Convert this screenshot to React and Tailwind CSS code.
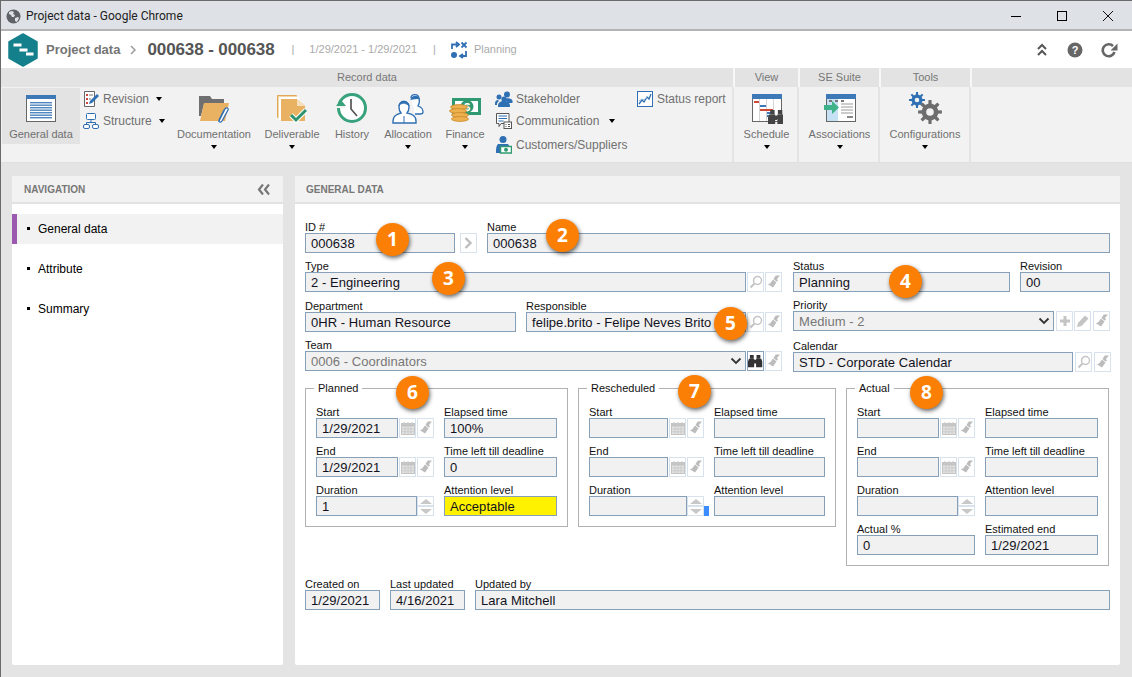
import React from "react";

function gear(cx, cy, ro, ri, n, hole) {
  let d = "";
  const step = (Math.PI * 2) / n;
  for (let i = 0; i < n; i++) {
    const a = i * step;
    const pts = [
      [ri, a - step * 0.5],
      [ri, a - step * 0.26],
      [ro, a - step * 0.16],
      [ro, a + step * 0.16],
      [ri, a + step * 0.26],
    ];
    pts.forEach(([r, t], j) => {
      const x = (cx + r * Math.cos(t)).toFixed(2);
      const y = (cy + r * Math.sin(t)).toFixed(2);
      d += (i === 0 && j === 0 ? "M" : "L") + x + " " + y + " ";
    });
  }
  d += "Z ";
  d += `M${cx - hole} ${cy} a${hole} ${hole} 0 1 0 ${hole * 2} 0 a${hole} ${hole} 0 1 0 ${-hole * 2} 0 Z`;
  return d;
}

const Caret = () => <span className="block w-0 h-0 border-x-[3.5px] border-x-transparent border-t-[4px] border-t-black" />;

const IconGeneral = () => (
  <svg width="32" height="32" viewBox="0 0 32 32">
    <rect x="1.500" y="3.500" width="29" height="26" fill="#fff" stroke="#666" />
    <rect x="1" y="3" width="30" height="4" fill="#3e79b7" />
    {[10, 12.5, 15, 17.5, 20, 22.5, 25].map((y) => (
      <rect key={y} x="5" y={y} width="22" height="1.400" fill="#4f86bf" />
    ))}
  </svg>
);
const IconDoc = () => (
  <svg width="32" height="32" viewBox="0 0 32 32">
    <path d="M1 4h11l2 3h12v5H6L3 24H1z" fill="#6f6f6f" />
    <path d="M6 11h25l-4 18H2z" fill="#e9b263" />
    <path d="M21 29l6-12c1-2 4-1 3 1l-6 11c-1 2-4 1-3-1l5-10" fill="#fff" stroke="#2f6eb3" strokeWidth="1.300" strokeLinecap="round" />
  </svg>
);
const IconDeliverable = () => (
  <svg width="32" height="32" viewBox="0 0 32 32">
    <rect x="1" y="3" width="20" height="23" fill="#f3d6a6" />
    <rect x="3" y="5" width="20" height="23" fill="#fff" />
    <path d="M1.500 3.500h19M1.500 3.500v22" stroke="#e0a857" fill="none" />
    <path d="M5 7h16l8 7v15H5z" fill="#e9b263" />
    <path d="M21 7l8 7h-8z" fill="#f6e0bb" />
    <path d="M15 23l5 5 10-10" fill="none" stroke="#fff" strokeWidth="5" />
    <path d="M15 23l5 5 10-10" fill="none" stroke="#2e9470" strokeWidth="3" />
  </svg>
);
const IconHistory = () => (
  <svg width="32" height="32" viewBox="0 0 32 32">
    <circle cx="16" cy="16" r="13.500" fill="#fff" stroke="#37a27c" strokeWidth="3" />
    <path d="M0 14l5-6 5 6z" fill="#37a27c" />
    <rect x="0" y="14" width="9" height="2" fill="#f2f2f2" />
    <path d="M15 7v10l6 7" fill="none" stroke="#555" strokeWidth="1.700" />
  </svg>
);
const IconAllocation = () => (
  <svg width="32" height="32" viewBox="0 0 32 32">
    <path d="M19 6c0-4 7-5 8 0 1 3 0 6-1 8 3 1 5 2 5 6 0 1-1 2-3 2h-5" fill="#fff" stroke="#2f6fb3" strokeWidth="1.300" />
    <path d="M18.500 8c0-5 8.500-6 9-1-3 0-6 0-9 1z" fill="#2f6fb3" />
    <path d="M7 15c0-7 10-7 10 0 0 3-1 5-2 6 4 1 9 2 9 8v2H1v-2c0-6 5-7 8-8-1-1-2-3-2-6z" fill="#fff" stroke="#2f6fb3" strokeWidth="1.400" />
    <path d="M7 14c1-3 3-2 5-3 2 1 4 1 5 3 0-6-10-7-10 0zM12 24v7" fill="#2f6fb3" stroke="#2f6fb3" />
  </svg>
);
const IconFinance = () => (
  <svg width="32" height="32" viewBox="0 0 32 32">
    <rect x="3" y="6" width="29" height="17" fill="#2f9a72" />
    <rect x="6" y="9" width="23" height="11" fill="#fff" />
    <circle cx="18" cy="14.500" r="6.500" fill="#2f9a72" />
    <text x="18" y="18.500" textAnchor="middle" fontSize="11" fontWeight="700" fill="#fff" fontFamily="Liberation Sans">$</text>
    {[14, 18, 22, 26].map((y) => (
      <ellipse key={y} cx={y < 18 ? 10 : y < 22 ? 9 : 11} cy={y + 1} rx="8.500" ry="2.400" fill="#eeb04f" stroke="#c98a2a" strokeWidth=".8" />
    ))}
  </svg>
);
const IconRevision = () => (
  <svg width="16" height="16" viewBox="0 0 16 16">
    <path d="M1.500.5h10v15h-10z" fill="#fff" stroke="#666" />
    <path d="M3 3h2v2H3zM3 7h2v2H3zM3 11h2v2H3z" fill="#d2473b" />
    <path d="M6 4h4M6 8h2" stroke="#777" />
    <path d="M6 13l1-3 7-7 2 2-7 7z" fill="#2f6fb3" />
  </svg>
);
const IconStructure = () => (
  <svg width="16" height="16" viewBox="0 0 16 16" fill="#fff" stroke="#2f6fb3">
    <rect x="3.500" y=".5" width="9" height="6" rx="1" />
    <path d="M8 6.500v3M3.500 11.500v-2h9v2" fill="none" />
    <rect x=".5" y="11.500" width="6" height="4" rx="1.500" />
    <rect x="9.500" y="11.500" width="6" height="4" rx="1.500" />
  </svg>
);
const IconStakeholder = () => (
  <svg width="18" height="16" viewBox="0 0 18 16" fill="#2f6fb3">
    <circle cx="12" cy="3.500" r="3" />
    <circle cx="4" cy="6" r="2.500" />
    <path d="M9 8c2-1 5-1 7 0 2 1 2 4 1 4h-5c0-2-1-3-3-4z" />
    <circle cx="9" cy="8" r="2.600" />
    <path d="M3 15c0-3 2-5 6-5s6 2 6 5v1H3zM0 13c0-3 1-4 3-4l1 1c-2 1-2 3-2 4H0z" />
  </svg>
);
const IconComm = () => (
  <svg width="16" height="16" viewBox="0 0 16 16">
    <path d="M.5.500h12.500v10H5l-2 3v-3H.5z" fill="#fff" stroke="#555" />
    <path d="M2.500 3h8.500M2.500 5.500h8.500M2.500 8h5" stroke="#2f6fb3" />
    <rect x="8" y="9" width="7.500" height="6.500" fill="#fff" stroke="#555" />
    <path d="M9.500 11.500h1M12 11.500h2M9.500 13.500h1M12 13.500h2" stroke="#555" />
  </svg>
);
const IconCustomers = () => (
  <svg width="16" height="18" viewBox="0 0 16 18">
    <circle cx="7" cy="3.500" r="3.500" fill="#2f6fb3" />
    <path d="M2 8h10l2 3H4v6H0c0-4 0-7 2-9z" fill="#2f6fb3" />
    <rect x="4.500" y="10.500" width="11" height="6.500" fill="#fff" stroke="#2f9a72" strokeWidth="1.500" />
    <circle cx="10" cy="13.750" r="2" fill="#2f9a72" />
  </svg>
);
const IconStatus = () => (
  <svg width="16" height="16" viewBox="0 0 16 16">
    <rect x=".5" y=".5" width="15" height="15" fill="#fff" stroke="#2f6fb3" />
    <path d="M2 13l3-4 2 2 3-5 2 2 2-5" fill="none" stroke="#2f6fb3" strokeWidth="1.300" />
    <path d="M2 10l3-2 2 1 3-3" fill="none" stroke="#8fb3d6" />
  </svg>
);
const Binoc = ({ x = 0, y = 0, s = 1, c = "#444" }) => (
  <g transform={`translate(${x} ${y}) scale(${s})`} fill={c}>
    <path d="M2 1h4v4H2zM9 1h4v4H9z" />
    <path d="M1 5h5.500v9H0V8zM8.500 5H14l1 3v6H8.500zM6.500 6h2v4h-2z" />
  </g>
);
const IconSchedule = () => (
  <svg width="32" height="32" viewBox="0 0 32 32">
    <rect x="1.500" y="2.500" width="29" height="27" fill="#fff" stroke="#666" />
    <rect x="1" y="2" width="30" height="5" fill="#3e79b7" />
    <path d="M8.500 7v22M15.500 7v22M22.500 7v22" stroke="#d5d5d5" />
    <rect x="3" y="9" width="5" height="2" fill="#cf4a36" />
    <rect x="9" y="13" width="6" height="2" fill="#3e79b7" />
    <rect x="9" y="17" width="13" height="2" fill="#cf4a36" />
    <rect x="16" y="20" width="4" height="2" fill="#3e79b7" />
    <rect x="16" y="23" width="2" height="2" fill="#3e79b7" />
    <Binoc x="17" y="17" s="1.100" />
  </svg>
);
const IconAssoc = () => (
  <svg width="32" height="32" viewBox="0 0 32 32">
    <rect x="2.500" y="2.500" width="29" height="27" fill="#fff" stroke="#666" />
    <rect x="2" y="2" width="30" height="5" fill="#3e79b7" />
    <rect x="3" y="7" width="11" height="22" fill="#c6e1f4" />
    <rect x="5" y="8" width="3" height="2" fill="#777" />
    <rect x="11" y="8" width="3" height="2" fill="#777" />
    <rect x="17" y="8" width="3" height="2" fill="#777" />
    <path d="M17 12h12M17 15h12M17 18h12M17 21h12" stroke="#999" />
    <rect x="23" y="24" width="6" height="2" fill="#888" />
    <path d="M0 13h8V9l7 6.500L8 22v-4H0z" fill="#3fb28a" />
  </svg>
);
const IconConfig = () => (
  <svg width="36" height="36" viewBox="0 0 36 36">
    <path fillRule="evenodd" d={gear(10, 10, 8, 5.500, 8, 2.300)} fill="#2f6fb3" />
    <path fillRule="evenodd" d={gear(23, 22, 12, 8.300, 8, 3.800)} fill="#6d6d6d" />
  </svg>
);

const Big = ({ w, icon, label, caret = true, pl = "" }) => (
  <div className={`flex flex-col items-center shrink-0 ${w} ${pl}`}>
    <div className="mt-[5px] h-[32px] flex items-center justify-center">{icon}</div>
    <div className="mt-[4px] h-[12px] leading-[12px] text-[11px] text-[#707070] whitespace-nowrap">{label}</div>
    {caret && <div className="mt-[5px]"><Caret /></div>}
  </div>
);

const Small = ({ icon, label, caret, ml = "ml-[10px]" }) => (
  <div className="flex items-center h-[22px] whitespace-nowrap">
    <span className="w-[18px] flex justify-center shrink-0">{icon}</span>
    <span className="ml-[3px] text-[12px] text-[#707070]">{label}</span>
    {caret && <span className={ml}><Caret /></span>}
  </div>
);

const Mag = () => (
  <svg width="14" height="14" viewBox="0 0 14 14" fill="none" stroke="#c4c4c4">
    <circle cx="8.500" cy="5.500" r="4" strokeWidth="1.400" />
    <path d="M5.500 8.500L1.500 12.500" strokeWidth="2" />
  </svg>
);
const Brush = () => (
  <svg width="14" height="14" viewBox="0 0 14 14" fill="#bcbcbc">
    <path d="M8 1.500l1-1 4 0-3 3.500 1 2-1.500.500-3-2.500z" />
    <path d="M6 4.500l3.500 3-3.500 5-5.500-3.500c1 0 2 0 3-1z" />
  </svg>
);
const Cal = () => (
  <svg width="14" height="14" viewBox="0 0 14 14">
    <rect x=".5" y="2.500" width="13" height="11" fill="#e4e4e4" stroke="#c4c4c4" />
    <rect x="1" y="3" width="12" height="2.500" fill="#c4c4c4" />
    <path d="M3 1v3M7 1v3M11 1v3M1 8h12M1 10.800h12M4 5v8M7 5v8M10 5v8" stroke="#cacaca" />
  </svg>
);
const Plus = () => (
  <svg width="12" height="12" viewBox="0 0 12 12" fill="#c4c4c4">
    <path d="M4.500 1h3v3.500H11v3H7.500V11h-3V7.500H1v-3h3.500z" />
  </svg>
);
const Pencil = () => (
  <svg width="14" height="14" viewBox="0 0 14 14" fill="#c4c4c4">
    <path d="M1 13l1-4 7-7.500 3.500 3L5.500 12z" />
  </svg>
);
const BinoBtn = () => (
  <svg width="15" height="14" viewBox="0 0 15 14"><Binoc x="0" y="0" s="0.950" c="#333" /></svg>
);

const Btn = ({ children, cls = "", dark }) => (
  <div className={`w-[17px] h-[20px] shrink-0 flex items-center justify-center border bg-white ${dark ? "border-[#8aa3bd]" : "border-[#d8e2ec]"} ${cls}`}>
    {children}
  </div>
);

const Input = ({ value, muted, select, yellow }) => (
  <div className={`h-[20px] w-full flex items-center border border-[#86a0ba] pl-[5px] text-[13px] leading-none whitespace-nowrap overflow-hidden ${yellow ? "bg-[#fff200]" : "bg-[#f1f1f1]"} ${muted ? "text-[#777777]" : "text-[#111122]"}`}>
    <span className="flex-1 tracking-[0.05px]">{value}</span>
    {select && (
      <svg width="12" height="8" viewBox="0 0 12 8" className="mr-[3px]">
        <path d="M1.500 1.500L6 6l4.500-4.500" fill="none" stroke="#333" strokeWidth="1.800" />
      </svg>
    )}
  </div>
);

const Field = ({ label, w, ...rest }) => (
  <div className={`shrink-0 ${w}`}>
    <div className="h-[12px] leading-[12px] text-[11px] text-[#111] whitespace-nowrap">{label}</div>
    <Input {...rest} />
  </div>
);

const Spinner = () => (
  <div className="w-[17px] h-[20px] shrink-0 flex flex-col justify-between">
    <div className="h-[10px] border border-[#d8e2ec] flex items-center justify-center bg-white">
      <span className="block w-0 h-0 border-x-[6px] border-x-transparent border-b-[5px] border-b-[#c8c8c8]" />
    </div>
    <div className="h-[10px] border border-[#d8e2ec] flex items-center justify-center bg-white">
      <span className="block w-0 h-0 border-x-[6px] border-x-transparent border-t-[5px] border-t-[#c8c8c8]" />
    </div>
  </div>
);

const Group = ({ title, w, lw, dw, rw, vals, extra, blue }) => (
  <fieldset className={`shrink-0 border border-[#b1b1b1] ${w} pl-[10px] pb-[3px]`}>
    <legend className="-ml-[2px] px-[4px] h-[12px] leading-[12px] text-[11px] text-[#111]">{title}</legend>
    <div className="pt-[12px]">
      <div className="flex items-end mb-[7px]">
        <Field label="Start" value={vals.start} w={lw} />
        <Btn cls="ml-[1px]"><Cal /></Btn>
        <Btn cls="ml-[1px]"><Brush /></Btn>
        <div className="ml-[10px]"><Field label="Elapsed time" value={vals.elapsed} w={rw} /></div>
      </div>
      <div className="flex items-end mb-[7px]">
        <Field label="End" value={vals.end} w={lw} />
        <Btn cls="ml-[1px]"><Cal /></Btn>
        <Btn cls="ml-[1px]"><Brush /></Btn>
        <div className="ml-[10px]"><Field label="Time left till deadline" value={vals.left} w={rw} /></div>
      </div>
      <div className="flex items-end mb-[7px] relative">
        <Field label="Duration" value={vals.dur} w={dw} />
        <Spinner />
        {blue && <span className="absolute left-[115px] bottom-0 w-[5px] h-[10px] bg-[#3b8cff]" />}
        <div className="ml-[10px]"><Field label="Attention level" value={vals.att} yellow={vals.yellow} w={rw} /></div>
      </div>
      {extra}
    </div>
  </fieldset>
);

const Badge = ({ n, cls }) => (
  <div className={`absolute ${cls} w-[33px] h-[33px] rounded-full bg-[#fb7f05] shadow-[1px_2px_4px_rgba(0,0,0,0.6)] flex items-center justify-center text-white text-[19px] font-bold font-['Open_Sans',sans-serif]`}>
    {n}
  </div>
);

const SecTab = ({ w, label }) => (
  <div className={`${w} h-full shrink-0 flex items-center justify-center text-[11px] text-[#777] border-r-[2px] border-r-[#f7f7f7]`}>{label}</div>
);

export default function App() {
  return (
    <div className="w-[1132px] h-[677px] overflow-hidden flex flex-col bg-[#e4e4e4] border-t border-l border-[#6a6a6a] font-['Liberation_Sans',Arial,sans-serif]">
      {/* Title bar */}
      <div className="h-[28px] shrink-0 bg-[#dee1e6] flex items-center pt-[2px]">
        <svg width="15" height="15" viewBox="0 0 15 15" className="ml-[5px]">
          <circle cx="7.500" cy="7.500" r="7" fill="#5f6368" />
          <path d="M3 3l3-1 2 1-1 2 2 1-1 2-2 0-1-2-2-1zM9 9l3-1 1 1-2 4-2-1z" fill="#dee1e6" />
        </svg>
        <span className="ml-[5px] text-[12px] text-[#222] font-['Roboto',sans-serif]">Project data - Google Chrome</span>
        <div className="ml-auto flex items-center mr-[18px]">
          <span className="block w-[10px] h-[1px] bg-black" />
          <span className="block w-[10px] h-[10px] border border-black ml-[36px]" />
          <svg width="12" height="12" viewBox="0 0 12 12" className="ml-[35px]"><path d="M1 1l10 10M11 1L1 11" stroke="#111" /></svg>
        </div>
      </div>
      <div className="h-[2px] shrink-0 bg-[#b4b4b4]" />
      {/* Header */}
      <div className="h-[37px] shrink-0 bg-white flex items-center">
        <svg width="30" height="34" viewBox="0 0 30 34" className="ml-[7px] shrink-0">
          <path d="M15 1L29 9v16l-14 8-14-8V9z" fill="#14808c" stroke="#14808c" strokeLinejoin="round" strokeWidth="1.500" />
          <rect x="5.500" y="10.500" width="8" height="3" fill="#fff" />
          <rect x="11.500" y="15.500" width="8" height="3" fill="#fff" />
          <rect x="18" y="19.500" width="7.500" height="3" fill="#fff" />
        </svg>
        <span className="ml-[8px] text-[13px] font-bold text-[#757575] whitespace-nowrap">Project data</span>
        <svg width="6" height="10" viewBox="0 0 6 10" className="ml-[10px]"><path d="M1 1l4 4-4 4" fill="none" stroke="#999" strokeWidth="1.500" /></svg>
        <span className="ml-[11px] text-[17px] font-bold text-[#555] tracking-[-0.1px] whitespace-nowrap">000638 - 000638</span>
        <span className="ml-[17px] text-[11px] text-[#aaa]">|</span>
        <span className="ml-[15px] text-[11px] text-[#aaa] whitespace-nowrap">1/29/2021 - 1/29/2021</span>
        <span className="ml-[16px] text-[11px] text-[#aaa]">|</span>
        <svg width="18" height="18" viewBox="0 0 18 18" className="ml-[14px]" fill="none" stroke="#2f6fb3" strokeWidth="1.800">
          <path d="M2 8V3.500h5M6 1l3 2.500L6 6" />
          <path d="M11.500 1.500l5 5M16.500 1.500l-5 5" />
          <circle cx="4" cy="14" r="3" fill="#2f6fb3" stroke="none" />
          <path d="M16 10v5h-5M13 13l-3 2 3 2" />
        </svg>
        <span className="ml-[6px] text-[11px] text-[#aaa]">Planning</span>
        <div className="ml-auto flex items-center mr-[14px]">
          <svg width="12" height="14" viewBox="0 0 12 14" fill="none" stroke="#555" strokeWidth="2"><path d="M2 6l4-4 4 4M2 12l4-4 4 4" /></svg>
          <svg width="16" height="16" viewBox="0 0 16 16" className="ml-[19px]">
            <circle cx="8" cy="8" r="7.500" fill="#666" />
            <text x="8" y="12" textAnchor="middle" fontSize="11" fontWeight="700" fill="#fff" fontFamily="Liberation Sans">?</text>
          </svg>
          <svg width="18" height="16" viewBox="0 0 18 16" className="ml-[17px]" fill="none" stroke="#666" strokeWidth="2.600">
            <path d="M14.500 10a6 6 0 1 1-1.500-6" />
            <path d="M17.500 1.500v7h-7z" fill="#666" stroke="none" />
          </svg>
        </div>
      </div>
      {/* Ribbon tabs */}
      <div className="h-[19px] shrink-0 bg-[#e3e3e3] flex">
        <SecTab w="w-[734px]" label="Record data" />
        <SecTab w="w-[65px]" label="View" />
        <SecTab w="w-[81px]" label="SE Suite" />
        <SecTab w="w-[91px]" label="Tools" />
      </div>
      {/* Ribbon */}
      <div className="h-[76px] shrink-0 bg-[#f2f2f2] flex border-b border-[#e0e0e0]">
        <div className="w-[733px] flex shrink-0 border-r-[2px] border-[#e4e4e4] pl-[1px]">
          <div className="w-[78px] h-[56px] mt-[1px] bg-[#e3e3e3] shrink-0 flex flex-col">
            <div className="-mt-[1px]"><Big w="w-full" icon={<IconGeneral />} label="General data" caret={false} /></div>
          </div>
          <div className="w-[94px] shrink-0 pl-[2px]">
            <div className="mt-[1px]"><Small icon={<IconRevision />} label="Revision" caret ml="ml-[7px]" /></div>
            <Small icon={<IconStructure />} label="Structure" caret ml="ml-[7px]" />
          </div>
          <Big w="w-[80px]" icon={<IconDoc />} label="Documentation" />
          <Big w="w-[76px]" icon={<IconDeliverable />} label="Deliverable" />
          <Big w="w-[44px]" icon={<IconHistory />} label="History" caret={false} />
          <Big w="w-[68px]" icon={<IconAllocation />} label="Allocation" />
          <Big w="w-[46px]" icon={<IconFinance />} label="Finance" />
          <div className="w-[148px] shrink-0 pl-[7px]">
            <div className="mt-[1px]"><Small icon={<IconStakeholder />} label="Stakeholder" /></div>
            <Small icon={<IconComm />} label="Communication" caret ml="ml-[10px]" />
            <div className="mt-[2px]"><Small icon={<IconCustomers />} label="Customers/Suppliers" /></div>
          </div>
          <div className="shrink-0 mt-[1px]"><Small icon={<IconStatus />} label="Status report" /></div>
        </div>
        <div className="w-[65px] shrink-0 border-r-[2px] border-[#e4e4e4]"><Big w="w-full" pl="pl-[2px]" icon={<IconSchedule />} label="Schedule" /></div>
        <div className="w-[81px] shrink-0 border-r-[2px] border-[#e4e4e4]"><Big w="w-full" pl="pl-[2px]" icon={<IconAssoc />} label="Associations" /></div>
        <div className="w-[91px] shrink-0 border-r-[2px] border-[#e4e4e4]"><Big w="w-full" pl="pl-[1px]" icon={<IconConfig />} label="Configurations" /></div>
      </div>

      {/* Content */}
      <div className="flex-1 flex pl-[11px] pt-[13px] pb-[12px]">
        {/* Navigation */}
        <div className="w-[271px] shrink-0 bg-white rounded-[2px]">
          <div className="h-[28px] bg-[#f2f2f2] border-b-2 border-[#e2e2e2] flex items-center pl-[12px] pr-[13px] pt-[1px]">
            <span className="text-[10px] font-bold text-[#777]">NAVIGATION</span>
            <svg width="13" height="11" viewBox="0 0 13 11" className="ml-auto" fill="none" stroke="#777" strokeWidth="2.200"><path d="M6 .5L2 5.500l4 5M12 .5L8 5.500l4 5" /></svg>
          </div>
          <div className="pt-[10px]">
            <div className="h-[30px] bg-[#f2f2f2] border-l-[5px] border-[#9b59b0] flex items-center text-[12px] text-black">
              <span className="w-[3px] h-[3px] bg-black ml-[10px] -mt-[2px]" />
              <span className="ml-[8px]">General data</span>
            </div>
            <div className="h-[30px] mt-[10px] pl-[15px] flex items-center text-[12px] text-black">
              <span className="w-[3px] h-[3px] bg-black -mt-[2px]" />
              <span className="ml-[8px]">Attribute</span>
            </div>
            <div className="h-[30px] mt-[10px] pl-[15px] flex items-center text-[12px] text-black">
              <span className="w-[3px] h-[3px] bg-black -mt-[2px]" />
              <span className="ml-[8px]">Summary</span>
            </div>
          </div>
        </div>

        {/* Form */}
        <div className="relative w-[825px] shrink-0 ml-[12px] bg-white rounded-[2px]">
          <div className="h-[28px] bg-[#f2f2f2] border-b-2 border-[#e2e2e2] flex items-center pl-[11px] pt-[1px]">
            <span className="text-[10px] font-bold text-[#777]">GENERAL DATA</span>
          </div>
          <div className="pl-[10px] pt-[17px]">
            {/* Row 1 */}
            <div className="flex items-end">
              <Field label="ID #" value="000638" w="w-[150px]" />
              <Btn cls="ml-[5px]">
                <svg width="9" height="12" viewBox="0 0 9 12"><path d="M1.500 1l5 5-5 5" fill="none" stroke="#bdbdbd" strokeWidth="2.400" /></svg>
              </Btn>
              <div className="ml-[10px]"><Field label="Name" value="000638" w="w-[623px]" /></div>
            </div>
            {/* Row 2 */}
            <div className="flex items-end mt-[7px]">
              <Field label="Type" value="2 - Engineering" w="w-[441px]" />
              <Btn cls="ml-[1px]"><Mag /></Btn>
              <Btn cls="ml-[1px]"><Brush /></Btn>
              <div className="ml-[11px]"><Field label="Status" value="Planning" w="w-[217px]" /></div>
              <div className="ml-[10px]"><Field label="Revision" value="00" w="w-[90px]" /></div>
            </div>
            {/* Row 3 */}
            <div className="flex items-start mt-[8px]">
              <Field label="Department" value="0HR - Human Resource" w="w-[211px]" />
              <div className="ml-[10px]"><Field label="Responsible" value="felipe.brito - Felipe Neves Brito" w="w-[220px]" /></div>
              <Btn cls="ml-[1px] mt-[12px]"><Mag /></Btn>
              <Btn cls="ml-[1px] mt-[12px]"><Brush /></Btn>
              <div className="ml-[11px] -mt-[1px]"><Field label="Priority" value="Medium - 2" muted select w="w-[261px]" /></div>
              <Btn cls="ml-[2px] mt-[11px]"><Plus /></Btn>
              <Btn cls="ml-[1px] mt-[11px]"><Pencil /></Btn>
              <Btn cls="ml-[2px] mt-[11px]"><Brush /></Btn>
            </div>
            {/* Row 4 */}
            <div className="flex items-start mt-[7px]">
              <Field label="Team" value="0006 - Coordinators" muted select w="w-[441px]" />
              <Btn dark cls="ml-[1px] mt-[12px]"><BinoBtn /></Btn>
              <Btn cls="ml-[1px] mt-[12px]"><Brush /></Btn>
              <div className="ml-[11px] mt-[1px]"><Field label="Calendar" value="STD - Corporate Calendar" w="w-[280px]" /></div>
              <Btn cls="ml-[2px] mt-[13px]"><Mag /></Btn>
              <Btn cls="ml-[2px] mt-[13px]"><Brush /></Btn>
            </div>
            {/* Groups */}
            <div className="flex items-start mt-[10px]">
              <Group
                title="Planned" w="w-[263px]" lw="w-[82px]" dw="w-[101px]" rw="w-[113px]"
                vals={{ start: "1/29/2021", elapsed: "100%", end: "1/29/2021", left: "0", dur: "1", att: "Acceptable", yellow: true }}
              />
              <div className="ml-[10px]">
                <Group title="Rescheduled" w="w-[258px]" lw="w-[79px]" dw="w-[98px]" rw="w-[111px]" blue vals={{}} />
              </div>
              <div className="ml-[10px]">
                <Group
                  title="Actual" w="w-[263px]" lw="w-[82px]" dw="w-[101px]" rw="w-[113px]"
                  vals={{}}
                  extra={
                    <div className="flex items-end mb-[7px]">
                      <Field label="Actual %" value="0" w="w-[118px]" />
                      <div className="ml-[10px]"><Field label="Estimated end" value="1/29/2021" w="w-[113px]" /></div>
                    </div>
                  }
                />
              </div>
            </div>
            {/* Bottom */}
            <div className="flex items-end mt-[12px]">
              <Field label="Created on" value="1/29/2021" w="w-[75px]" />
              <div className="ml-[10px]"><Field label="Last updated" value="4/16/2021" w="w-[75px]" /></div>
              <div className="ml-[10px]"><Field label="Updated by" value="Lara Mitchell" w="w-[635px]" /></div>
            </div>
          </div>
          <Badge n="1" cls="left-[81px] top-[47px]" />
          <Badge n="2" cls="left-[251px] top-[43px]" />
          <Badge n="3" cls="left-[137px] top-[86px]" />
          <Badge n="4" cls="left-[594px] top-[89px]" />
          <Badge n="5" cls="left-[419px] top-[131px]" />
          <Badge n="6" cls="left-[101px] top-[200px]" />
          <Badge n="7" cls="left-[383px] top-[199px]" />
          <Badge n="8" cls="left-[615px] top-[200px]" />
        </div>
      </div>
    </div>
  );
}
